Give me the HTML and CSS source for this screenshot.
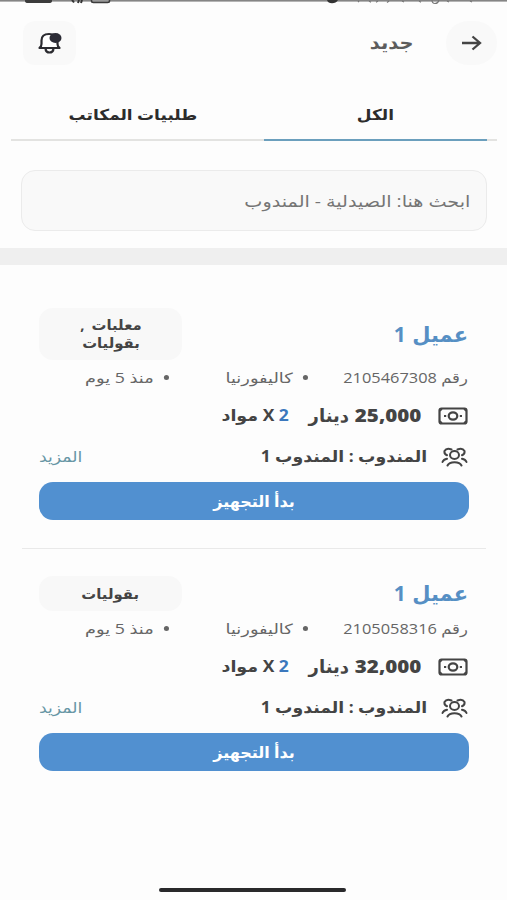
FILE: index.html
```html
<!DOCTYPE html>
<html lang="ar" dir="rtl">
<head>
    <meta charset="UTF-8">
    <meta name="viewport" content="width=device-width, initial-scale=1.0">
    <title>جديد</title>
    <link rel="stylesheet" href="styles.css">
</head>
<body>

<svg class="status-bar" viewBox="0 0 507 6">
    <rect x="0" y="0" width="507" height="1.6" fill="#858585"/>
    <path d="M25 0h27v1q0 2-3 2H28q-3 0-3-2z" fill="#3c3c3c"/>
    <path d="M72 0l2 2.500M78 3l1-3M81 3l1-3" stroke="#333" stroke-width="2"/>
    <path d="M91.500 0v1q0 1.500 2 1.500h14q2 0 2-1.500V0" fill="#999" stroke="#3c3c3c" stroke-width="1.500"/>
    <path d="M327 0q1 3.200 5 3.200T338 0z" fill="#333"/>
    <path d="M358 1l1 1.200M369 1l2 1.300M378 1l-2 1.300M389 1l-2 1.500M402 1l2 1M419 1l2 1.200M432 0q0 3.500 3 3.500T439 0M447 1l2 1M470 1l2 1" fill="none" stroke="#777" stroke-width="1.200"/>
</svg>

<header class="header">
    <button class="icon-btn back-btn">
        <svg width="20" height="16" viewBox="0 0 20 16">
            <path d="M0 8H18M10.500 1.500L18 8l-7.500 6.500" fill="none" stroke="#444" stroke-width="2.300"/>
        </svg>
    </button>
    <h1>جديد</h1>
    <button class="icon-btn bell-btn">
        <svg width="24" height="22" viewBox="0 0 24 22">
            <path d="M1.500 16q2-1.500 2-4V8.500Q3.500 2 11 2t8.500 6.500V12q0 2.500 2 4z" fill="#fff" stroke="#2b2b30" stroke-width="2.200" stroke-linejoin="round"/>
            <path d="M7.500 17q.5 3.500 4 3.500t4-3.500" fill="none" stroke="#2b2b30" stroke-width="2.200"/>
            <ellipse cx="17.500" cy="6" rx="6" ry="5" fill="#2b2b35"/>
        </svg>
    </button>
</header>

<nav class="tabs">
    <a class="tab active"><span>الكل</span></a>
    <a class="tab"><span>طلبيات المكاتب</span></a>
</nav>

<div class="search">
    <div class="search-box"><span>ابحث هنا: الصيدلية - المندوب</span></div>
</div>

<main class="orders">
    <section class="order">
        <div class="order-head">
            <h2>عميل 1</h2>
            <div class="tag"><span>معلبات ,<br>بقوليات</span></div>
        </div>
        <div class="meta">
            <span class="number">رقم 2105467308</span>
            <span class="place">كاليفورنيا</span>
            <span class="time">منذ 5 يوم</span>
        </div>
        <div class="row">
            <svg class="cash" width="30" height="18" viewBox="0 0 30 18">
                <rect x="1.500" y="1.500" width="27" height="15" rx="2" fill="none" stroke="#444" stroke-width="2.200"/>
                <ellipse cx="15" cy="9" rx="4.300" ry="3.600" fill="none" stroke="#444" stroke-width="2.200"/>
                <path d="M6 9h2.200M21.800 9H24" stroke="#444" stroke-width="2"/>
                <path d="M2 4l2-2M26 2l2 2M2 14l2 2M26 16l2-2" stroke="#444" stroke-width="1.500"/>
            </svg>
            <span class="price"><b>25,000</b> دينار</span>
            <span class="items"><i>2</i> X مواد</span>
        </div>
        <div class="row">
            <svg class="people" width="27" height="20" viewBox="0 0 27 20">
                <g fill="none" stroke="#444" stroke-width="2" stroke-linecap="round">
                    <ellipse cx="13.500" cy="8" rx="4.500" ry="4"/>
                    <path d="M6.500 18.500q1.500-3.300 7-3.300t7 3.300M1.500 15q1-2.500 4.500-3.200M25.500 15q-1-2.500-4.500-3.200M6 8.200Q3 7 3.500 4 5.500.5 10.500 2.500M21 8.200q3-1.200 2.500-4.200-2-3.500-7-1.500"/>
                </g>
            </svg>
            <span class="agent">المندوب : المندوب 1</span>
            <a class="more">المزيد</a>
        </div>
        <button class="start-btn">بدأ التجهيز</button>
    </section>

    <section class="order">
        <div class="order-head">
            <h2>عميل 1</h2>
            <div class="tag"><span>بقوليات</span></div>
        </div>
        <div class="meta">
            <span class="number">رقم 2105058316</span>
            <span class="place">كاليفورنيا</span>
            <span class="time">منذ 5 يوم</span>
        </div>
        <div class="row">
            <svg class="cash" width="30" height="18" viewBox="0 0 30 18">
                <rect x="1.500" y="1.500" width="27" height="15" rx="2" fill="none" stroke="#444" stroke-width="2.200"/>
                <ellipse cx="15" cy="9" rx="4.300" ry="3.600" fill="none" stroke="#444" stroke-width="2.200"/>
                <path d="M6 9h2.200M21.800 9H24" stroke="#444" stroke-width="2"/>
                <path d="M2 4l2-2M26 2l2 2M2 14l2 2M26 16l2-2" stroke="#444" stroke-width="1.500"/>
            </svg>
            <span class="price"><b>32,000</b> دينار</span>
            <span class="items"><i>2</i> X مواد</span>
        </div>
        <div class="row">
            <svg class="people" width="27" height="20" viewBox="0 0 27 20">
                <g fill="none" stroke="#444" stroke-width="2" stroke-linecap="round">
                    <ellipse cx="13.500" cy="8" rx="4.500" ry="4"/>
                    <path d="M6.500 18.500q1.500-3.300 7-3.300t7 3.300M1.500 15q1-2.500 4.500-3.200M25.500 15q-1-2.500-4.500-3.200M6 8.200Q3 7 3.500 4 5.500.5 10.500 2.500M21 8.200q3-1.200 2.500-4.200-2-3.500-7-1.500"/>
                </g>
            </svg>
            <span class="agent">المندوب : المندوب 1</span>
            <a class="more">المزيد</a>
        </div>
        <button class="start-btn">بدأ التجهيز</button>
    </section>
</main>

<div class="home-bar"></div>

</body>
</html>
```
FILE: styles.css
```css
* {
    box-sizing: border-box;
}
body {
    font-family: "Open Sans", "DejaVu Sans", sans-serif;
    background-color: #fdfdfd;
    color: #444;
    margin: 0;
    height: 900px;
    display: flex;
    flex-direction: column;
    overflow: hidden;
}
h1, h2 {
    margin: 0;
}
button {
    font-family: inherit;
    border: none;
}
.status-bar {
    display: block;
    width: 507px;
    height: 6px;
}
.header {
    display: flex;
    align-items: center;
    height: 74px;
    padding: 0 10px 0 23px;
}
.header h1 {
    font-size: 18px;
    line-height: 24px;
    padding-bottom: 2px;
    font-weight: 600;
    color: #5c5c5c;
    margin-right: 32px;
    transform: scaleX(1.08);
    transform-origin: right;
}
.icon-btn {
    display: flex;
    align-items: center;
    justify-content: center;
    height: 44px;
    padding: 0;
    background-color: #f9f9f9;
}
.back-btn {
    width: 51px;
    border-radius: 22px;
}
.bell-btn {
    width: 53px;
    border-radius: 12px;
    margin-right: auto;
}
.tabs {
    display: flex;
    height: 61px;
    margin: 0 10px 0 11px;
    padding-right: 10px;
    border-bottom: 2px solid #e3e3e1;
}
.tab {
    display: flex;
    flex: none;
    justify-content: center;
    width: 223px;
    height: 61px;
    padding-top: 22px;
    font-size: 15px;
    line-height: 24px;
    font-weight: bold;
    color: #2c2c2c;
}
.tab + .tab {
    width: 263px;
}
.tab span {
    transform: scaleX(1.13);
}
.tab.active {
    border-bottom: 2px solid #6b9fbd;
}
.search {
    padding: 29px 20px 17px 21px;
    border-bottom: 17px solid #efefef;
}
.search-box {
    display: flex;
    align-items: center;
    height: 61px;
    padding: 0 16px;
    font-size: 16px;
    color: #757575;
    background-color: #f9f9f9;
    border: 1px solid #ebebeb;
    border-radius: 14px;
}
.search-box span {
    transform: scaleX(1.2);
    transform-origin: right;
}
.orders {
    padding: 43px 21px 0 22px;
}
.order {
    padding: 0 17px;
}
.order + .order {
    margin-top: 28px;
    padding-top: 27px;
    border-top: 1px solid #e9e9e9;
}
.order-head {
    display: flex;
    align-items: center;
    justify-content: space-between;
}
.order-head h2 {
    font-size: 21px;
    line-height: 30px;
    padding: 0 1px 1px 0;
    word-spacing: 1px;
    color: #568fc4;
}
.tag {
    display: flex;
    align-items: center;
    justify-content: center;
    text-align: center;
    width: 143px;
    min-height: 35px;
    padding: 8px 0;
    font-size: 14px;
    line-height: 18px;
    font-weight: bold;
    background-color: #f8f8f8;
    border-radius: 14px;
}
.tag span {
    word-spacing: 3px;
    transform: scaleX(1.06);
}
.meta {
    display: grid;
    grid-template-columns: 161px 139px 1fr;
    align-items: center;
    height: 35px;
    font-size: 14px;
    line-height: 20px;
    color: #666;
}
.meta span {
    transform: scaleX(1.27);
    transform-origin: right;
}
.meta .number {
    padding-right: 1px;
    transform: scaleX(1.17);
}
.place, .time {
    display: flex;
    align-items: center;
    gap: 8px;
}
.place::before, .time::before {
    content: "";
    width: 4px;
    height: 5px;
    border-radius: 50%;
    background-color: #666;
}
.row {
    display: flex;
    align-items: center;
    height: 41px;
    font-weight: bold;
}
.row svg {
    margin-right: 1px;
}
.row span, .row a {
    padding-bottom: 2px;
}
.price {
    font-size: 18px;
    margin-right: 17px;
}
.price b {
    display: inline-block;
    margin-left: 9px;
    transform: scaleX(1.14);
    transform-origin: right;
}
.items {
    font-size: 16px;
    margin-right: 20px;
    transform: scaleX(1.09);
    transform-origin: right;
}
.items i {
    font-style: normal;
    color: #3b78bd;
}
.agent {
    font-size: 16px;
    margin-right: 14px;
    transform: scaleX(1.08);
    transform-origin: right;
}
.more {
    font-size: 15px;
    font-weight: normal;
    color: #6796a5;
    margin-right: auto;
    transform: scaleX(1.15);
    transform-origin: left;
}
.start-btn {
    display: block;
    width: 100%;
    height: 38px;
    margin-top: 5px;
    padding: 0;
    font-size: 16px;
    font-weight: bold;
    color: #fff;
    background-color: #5190d0;
    border-radius: 14px;
}
.home-bar {
    width: 187px;
    height: 4px;
    margin: auto auto 8px;
    position: relative;
    right: 1px;
    border-radius: 2px;
    background-color: #29292b;
}
```
